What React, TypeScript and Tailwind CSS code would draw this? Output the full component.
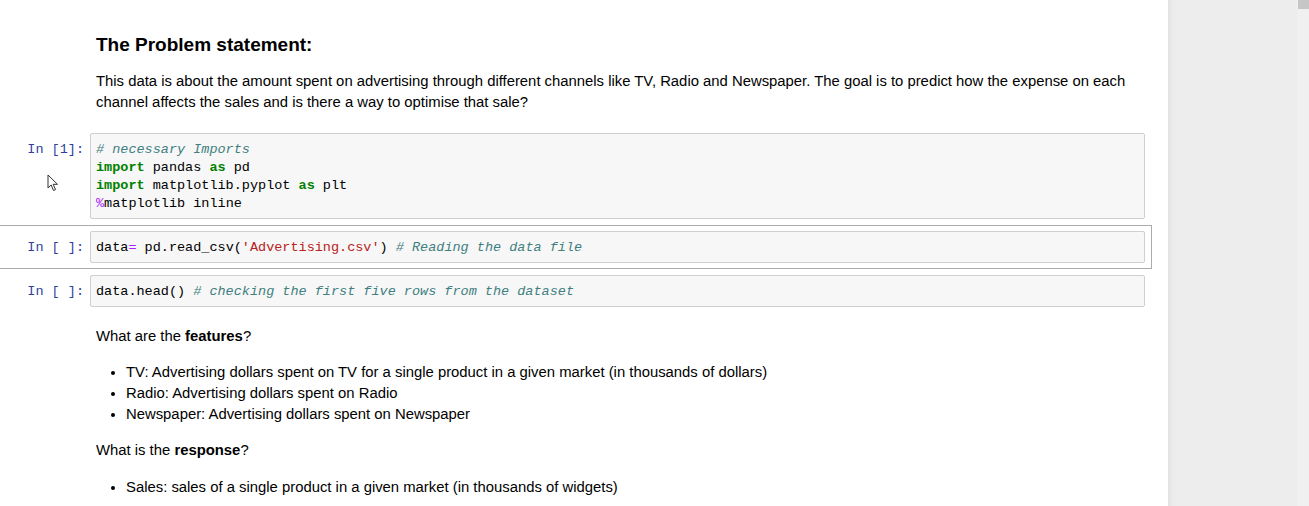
import React from 'react'

const sans = { fontFamily: '"Liberation Sans", Arial, sans-serif' }
const mono = { fontFamily: '"Liberation Mono", "DejaVu Sans Mono", monospace' }

const Kw = ({ children }: { children: React.ReactNode }) => (
  <span className="font-bold text-[#008000]">{children}</span>
)
const Cm = ({ children }: { children: React.ReactNode }) => (
  <span className="italic text-[#408080]">{children}</span>
)
const Op = ({ children }: { children: React.ReactNode }) => (
  <span className="text-[#aa22ff]">{children}</span>
)
const Str = ({ children }: { children: React.ReactNode }) => (
  <span className="text-[#ba2121]">{children}</span>
)

interface CodeCellProps {
  prompt: string
  selected?: boolean
  children: React.ReactNode
}

const CodeCell: React.FC<CodeCellProps> = ({ prompt, selected, children }) => (
  <div
    className={`flex w-[1152px] py-[5px] pr-[6px] border-y border-r ${
      selected ? 'border-[#ababab]' : 'border-transparent'
    }`}
  >
    <div
      className="w-[90px] shrink-0 pr-[6px] pt-[8px] text-right text-[13.5px] leading-[18px] text-[#303f9f]"
      style={mono}
    >
      {prompt}
    </div>
    <div
      className="flex-1 rounded-[2px] border border-[#cfcfcf] bg-[#f7f7f7] px-[5px] pt-[7px] pb-[5px] text-[13.5px] leading-[18px] text-[#000] whitespace-pre"
      style={mono}
    >
      {children}
    </div>
  </div>
)

export default function App() {
  return (
    <div className="flex h-[506px] w-[1309px] overflow-hidden bg-[#ededed]">
      <div className="relative w-[1168px] shrink-0 bg-white text-[#000]" style={sans}>
        {/* markdown: problem statement */}
        <div className="pl-[96px] pr-[30px] pt-[33px]">
          <h2 className="text-[19px] font-bold leading-[24px]">The Problem statement:</h2>
          <p className="mt-[14px] text-[14.85px] leading-[21px]">
            This data is about the amount spent on advertising through different channels like TV, Radio and
            Newspaper. The goal is to predict how the expense on each channel affects the sales and is there a
            way to optimise that sale?
          </p>
        </div>

        <div className="mt-[14px] flex flex-col">
          <CodeCell prompt="In [1]:">
            <Cm># necessary Imports</Cm>
            {'\n'}
            <Kw>import</Kw> pandas <Kw>as</Kw> pd{'\n'}
            <Kw>import</Kw> matplotlib.pyplot <Kw>as</Kw> plt{'\n'}
            <Op>%</Op>matplotlib inline
          </CodeCell>
          <CodeCell prompt="In [ ]:" selected>
            data<Op>=</Op> pd.read_csv(<Str>'Advertising.csv'</Str>) <Cm># Reading the data file</Cm>
          </CodeCell>
          <CodeCell prompt="In [ ]:">
            data.head() <Cm># checking the first five rows from the dataset</Cm>
          </CodeCell>
        </div>

        {/* markdown: features / response */}
        <div className="pl-[96px] pt-[13px] text-[14.85px] leading-[21px]">
          <p>
            What are the <b>features</b>?
          </p>
          <ul className="mt-[15px] list-disc pl-[30px]">
            <li>TV: Advertising dollars spent on TV for a single product in a given market (in thousands of dollars)</li>
            <li>Radio: Advertising dollars spent on Radio</li>
            <li>Newspaper: Advertising dollars spent on Newspaper</li>
          </ul>
          <p className="mt-[15px]">
            What is the <b>response</b>?
          </p>
          <ul className="mt-[16px] list-disc pl-[30px]">
            <li>Sales: sales of a single product in a given market (in thousands of widgets)</li>
          </ul>
        </div>

        {/* mouse pointer */}
        <svg className="absolute left-[47px] top-[174px]" width="12" height="18" viewBox="0 0 12 18">
          <path
            d="M1 1 L1 14 L4.2 11 L6.5 16.5 L8.5 15.6 L6.2 10.3 L10.5 10.3 Z"
            fill="white"
            stroke="#333"
            strokeWidth="1"
            strokeLinejoin="round"
          />
        </svg>
      </div>

      {/* page gutter */}
      <div className="relative flex-1 bg-gradient-to-r from-[#e2e2e2] via-[#ececec] to-[#ededed] bg-[length:10px_100%] bg-no-repeat">
        <div className="absolute right-0 top-0 h-full w-[12px] bg-[#f0f0f0]" />
        <div className="absolute right-0 top-0 h-[9px] w-[11px] bg-[#c6c6c6]" />
      </div>
    </div>
  )
}
